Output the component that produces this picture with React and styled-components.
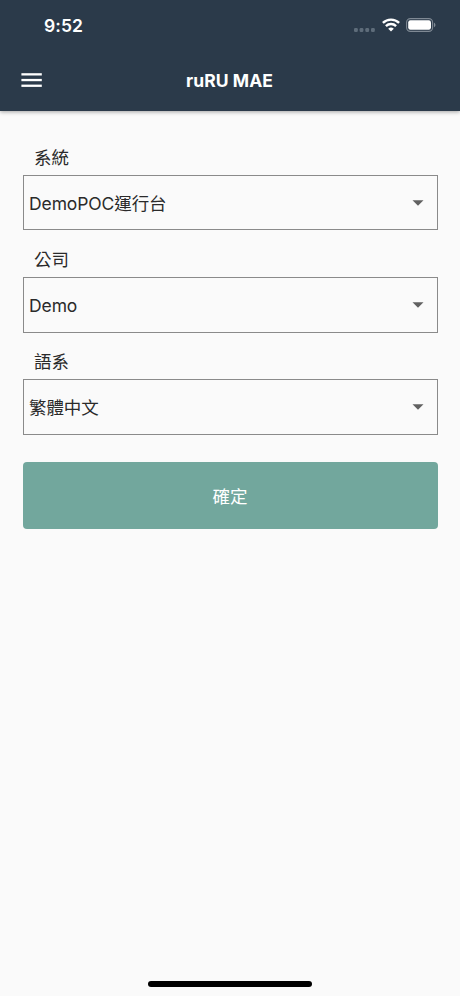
import React from 'react';
import styled, { createGlobalStyle } from 'styled-components';

const GlobalStyle = createGlobalStyle`
  * {
    box-sizing: border-box;
  }

  body {
    margin: 0;
    background-color: #fafafa;
    font-family: Inter, 'Noto Sans CJK TC', sans-serif;
  }
`;

const Screen = styled.div`
  display: flex;
  flex-direction: column;
  width: 460px;
  height: 996px;
  background-color: #fafafa;
  overflow: hidden;
`;

const Header = styled.header`
  height: 111px;
  flex-shrink: 0;
  background-color: #2b3a4a;
  color: #fff;
  box-shadow: 0 1px 4px rgba(0, 0, 0, 0.35);
`;

const StatusBar = styled.div`
  display: flex;
  align-items: center;
  justify-content: space-between;
  height: 50px;
  padding: 0 24px 0 44px;
`;

const Time = styled.div`
  padding-top: 2px;
  font-size: 17.5px;
  font-weight: 600;
  line-height: 22px;
  letter-spacing: 0.1px;
`;

const StatusIcons = styled.div`
  display: flex;
  align-items: center;
`;

const SignalDots = styled.svg`
  display: block;
  margin: 10px 6.5px 0 0;
`;

const WifiIcon = styled.svg`
  display: block;
  margin-right: 6.5px;
`;

const BatteryIcon = styled.svg`
  display: block;
`;

const Toolbar = styled.div`
  display: grid;
  grid-template-columns: 62px 1fr 62px;
  align-items: center;
  height: 60px;
`;

const MenuButton = styled.button`
  display: flex;
  justify-content: center;
  padding: 0;
  border: 0;
  background: none;
  color: inherit;
`;

const Title = styled.h1`
  margin: 0;
  padding: 1px 1px 0 0;
  font-size: 17.5px;
  font-weight: 700;
  line-height: 24px;
  letter-spacing: 0.05px;
  text-align: center;
`;

const Form = styled.main`
  flex: 1;
  padding: 34px 22.5px 0;
`;

const Field = styled.div`
  height: 102.2px;
`;

const Label = styled.div`
  height: 30px;
  padding-left: 11.5px;
  font-size: 17.5px;
  line-height: 26px;
  color: #2a2a2a;
`;

const SelectBox = styled.div`
  display: flex;
  align-items: center;
  justify-content: space-between;
  height: 55.4px;
  padding: 0 13px 0 5.5px;
  border: 1px solid #8a8a8a;
  font-size: 17.5px;
  line-height: 26px;
  color: #2a2a2a;
`;

const Value = styled.span`
  padding-top: 1.8px;
  letter-spacing: -0.1px;
`;

const Arrow = styled.svg`
  display: block;
  fill: #616161;
`;

const ConfirmButton = styled.button`
  display: block;
  width: 100%;
  height: 67px;
  margin-top: 10.7px;
  padding: 0;
  border: 0;
  border-radius: 4px;
  background-color: #72a79d;
  color: #fff;
  font-family: inherit;
  font-size: 17.5px;
  font-weight: 400;
`;

const HomeIndicator = styled.div`
  width: 164px;
  height: 6px;
  margin: 0 auto 9px;
  border-radius: 3px;
  background-color: #000;
`;

const fields = [
  { label: '系統', value: 'DemoPOC運行台' },
  { label: '公司', value: 'Demo' },
  { label: '語系', value: '繁體中文' },
];

function SelectField({ label, value }) {
  return (
    <Field>
      <Label>{label}</Label>
      <SelectBox>
        <Value>{value}</Value>
        <Arrow width="12" height="6" viewBox="0 0 12 6">
          <path d="M0.5 0.2h11L6 5.8z" />
        </Arrow>
      </SelectBox>
    </Field>
  );
}

function App() {
  return (
    <>
      <GlobalStyle />
      <Screen>
        <Header>
          <StatusBar>
            <Time>9:52</Time>
            <StatusIcons>
              <SignalDots width="21" height="4" viewBox="0 0 21 4" fill="#5e6c7a">
                <rect x="0" y="0" width="3.8" height="4" rx="1.2" />
                <rect x="5.6" y="0" width="3.8" height="4" rx="1.2" />
                <rect x="11.3" y="0" width="3.8" height="4" rx="1.2" />
                <rect x="17" y="0" width="3.8" height="4" rx="1.2" />
              </SignalDots>
              <WifiIcon width="18" height="14" viewBox="0 0 18 14" fill="none" stroke="#fff" strokeWidth="2.4">
                <path d="M0.9 4.9a11.6 11.6 0 0 1 16.2 0" />
                <path d="M3.9 8.1a7.3 7.3 0 0 1 10.2 0" />
                <path d="M9 13.6L6.2 10.8a4 4 0 0 1 5.6 0z" fill="#fff" stroke="none" />
              </WifiIcon>
              <BatteryIcon width="30" height="14" viewBox="0 0 30 14">
                <rect x="0.6" y="0.6" width="26" height="12.8" rx="3.8" fill="none" stroke="#7f8994" strokeWidth="1.1" />
                <rect x="2.2" y="2.2" width="22.8" height="9.6" rx="2.2" fill="#fff" />
                <path d="M28 4.8c1.9.7 1.9 3.7 0 4.4z" fill="#7f8994" />
              </BatteryIcon>
            </StatusIcons>
          </StatusBar>
          <Toolbar>
            <MenuButton aria-label="menu">
              <svg width="21" height="14" viewBox="0 0 21 14" fill="#fff">
                <rect width="20.4" height="2.3" x="0.4" y="0.2" />
                <rect width="20.4" height="2.3" x="0.4" y="5.9" />
                <rect width="20.4" height="2.3" x="0.4" y="11.6" />
              </svg>
            </MenuButton>
            <Title>ruRU MAE</Title>
          </Toolbar>
        </Header>
        <Form>
          {fields.map((field) => (
            <SelectField key={field.label} label={field.label} value={field.value} />
          ))}
          <ConfirmButton>確定</ConfirmButton>
        </Form>
        <HomeIndicator />
      </Screen>
    </>
  );
}

export default App;
